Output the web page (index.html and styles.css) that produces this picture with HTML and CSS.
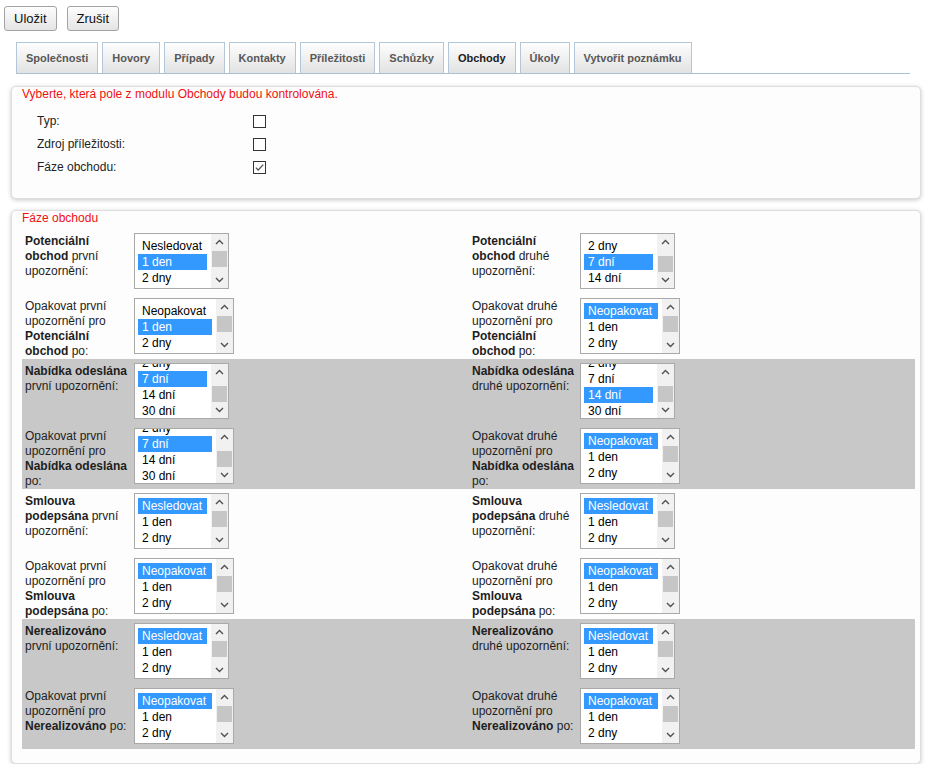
FILE: index.html
```html
<!DOCTYPE html>
<html lang="cs">
<head>
<meta charset="utf-8">
<title>Obchody</title>
<link rel="stylesheet" href="styles.css">
</head>
<body>
<div class="actions">
  <button class="btn">Uložit</button>
  <button class="btn">Zrušit</button>
</div>

<div class="tabs">
  <div class="tab">Společnosti</div>
  <div class="tab">Hovory</div>
  <div class="tab">Případy</div>
  <div class="tab">Kontakty</div>
  <div class="tab">Příležitosti</div>
  <div class="tab">Schůzky</div>
  <div class="tab active">Obchody</div>
  <div class="tab">Úkoly</div>
  <div class="tab">Vytvořit poznámku</div>
</div>

<div class="panel panel-fields">
  <div class="title">Vyberte, která pole z modulu Obchody budou kontrolována.</div>
  <div class="fields">
    <div class="field-label">Typ:</div>
    <div class="field-box"><span class="cb"></span></div>
    <div class="field-label">Zdroj příležitosti:</div>
    <div class="field-box"><span class="cb"></span></div>
    <div class="field-label">Fáze obchodu:</div>
    <div class="field-box"><span class="cb"><svg width="11" height="11" viewBox="0 0 11 11"><polyline points="1.8,5.6 4.2,8 9.3,2.6" fill="none" stroke="#555" stroke-width="1.3"/></svg></span></div>
  </div>
</div>

<div class="panel panel-stages">
  <div class="title">Fáze obchodu</div>
  <div class="stages">

    <!-- Row 1 -->
    <div class="srow">
      <div class="lbl"><b>Potenciální obchod</b> první upozornění:</div>
      <div class="cell">
        <div class="lb w95">
          <div class="lb-view"><div class="lb-list">
            <div class="opt">Nesledovat</div><div class="opt sel">1 den</div><div class="opt">2 dny</div><div class="opt">7 dní</div><div class="opt">14 dní</div><div class="opt">30 dní</div>
          </div></div>
          <div class="sb"><div class="sb-btn"><svg width="9" height="6" viewBox="0 0 9 6"><polyline points="1,5 4.5,1.5 8,5" fill="none" stroke="#505050" stroke-width="1.4"/></svg></div><div class="sb-track"><div class="sb-thumb t1"></div></div><div class="sb-btn"><svg width="9" height="6" viewBox="0 0 9 6"><polyline points="1,1 4.5,4.5 8,1" fill="none" stroke="#505050" stroke-width="1.4"/></svg></div></div>
        </div>
      </div>
      <div class="lbl"><b>Potenciální obchod</b> druhé upozornění:</div>
      <div class="cell">
        <div class="lb w95">
          <div class="lb-view"><div class="lb-list s32">
            <div class="opt">Nesledovat</div><div class="opt">1 den</div><div class="opt">2 dny</div><div class="opt sel">7 dní</div><div class="opt">14 dní</div><div class="opt">30 dní</div>
          </div></div>
          <div class="sb"><div class="sb-btn"><svg width="9" height="6" viewBox="0 0 9 6"><polyline points="1,5 4.5,1.5 8,5" fill="none" stroke="#505050" stroke-width="1.4"/></svg></div><div class="sb-track"><div class="sb-thumb t6"></div></div><div class="sb-btn"><svg width="9" height="6" viewBox="0 0 9 6"><polyline points="1,1 4.5,4.5 8,1" fill="none" stroke="#505050" stroke-width="1.4"/></svg></div></div>
        </div>
      </div>
    </div>

    <!-- Row 2 -->
    <div class="srow">
      <div class="lbl">Opakovat první upozornění pro <b>Potenciální obchod</b> po:</div>
      <div class="cell">
        <div class="lb w100">
          <div class="lb-view"><div class="lb-list">
            <div class="opt">Neopakovat</div><div class="opt sel">1 den</div><div class="opt">2 dny</div><div class="opt">7 dní</div><div class="opt">14 dní</div><div class="opt">30 dní</div>
          </div></div>
          <div class="sb"><div class="sb-btn"><svg width="9" height="6" viewBox="0 0 9 6"><polyline points="1,5 4.5,1.5 8,5" fill="none" stroke="#505050" stroke-width="1.4"/></svg></div><div class="sb-track"><div class="sb-thumb t1"></div></div><div class="sb-btn"><svg width="9" height="6" viewBox="0 0 9 6"><polyline points="1,1 4.5,4.5 8,1" fill="none" stroke="#505050" stroke-width="1.4"/></svg></div></div>
        </div>
      </div>
      <div class="lbl">Opakovat druhé upozornění pro <b>Potenciální obchod</b> po:</div>
      <div class="cell">
        <div class="lb w100">
          <div class="lb-view"><div class="lb-list">
            <div class="opt sel">Neopakovat</div><div class="opt">1 den</div><div class="opt">2 dny</div><div class="opt">7 dní</div><div class="opt">14 dní</div><div class="opt">30 dní</div>
          </div></div>
          <div class="sb"><div class="sb-btn"><svg width="9" height="6" viewBox="0 0 9 6"><polyline points="1,5 4.5,1.5 8,5" fill="none" stroke="#505050" stroke-width="1.4"/></svg></div><div class="sb-track"><div class="sb-thumb t1"></div></div><div class="sb-btn"><svg width="9" height="6" viewBox="0 0 9 6"><polyline points="1,1 4.5,4.5 8,1" fill="none" stroke="#505050" stroke-width="1.4"/></svg></div></div>
        </div>
      </div>
    </div>

    <!-- Row 3 -->
    <div class="srow gray">
      <div class="lbl"><b>Nabídka odeslána</b> první upozornění:</div>
      <div class="cell">
        <div class="lb w95">
          <div class="lb-view"><div class="lb-list s45">
            <div class="opt">Nesledovat</div><div class="opt">1 den</div><div class="opt">2 dny</div><div class="opt sel">7 dní</div><div class="opt">14 dní</div><div class="opt">30 dní</div>
          </div></div>
          <div class="sb"><div class="sb-btn"><svg width="9" height="6" viewBox="0 0 9 6"><polyline points="1,5 4.5,1.5 8,5" fill="none" stroke="#505050" stroke-width="1.4"/></svg></div><div class="sb-track"><div class="sb-thumb t6"></div></div><div class="sb-btn"><svg width="9" height="6" viewBox="0 0 9 6"><polyline points="1,1 4.5,4.5 8,1" fill="none" stroke="#505050" stroke-width="1.4"/></svg></div></div>
        </div>
      </div>
      <div class="lbl"><b>Nabídka odeslána</b> druhé upozornění:</div>
      <div class="cell">
        <div class="lb w95">
          <div class="lb-view"><div class="lb-list s45">
            <div class="opt">Nesledovat</div><div class="opt">1 den</div><div class="opt">2 dny</div><div class="opt">7 dní</div><div class="opt sel">14 dní</div><div class="opt">30 dní</div>
          </div></div>
          <div class="sb"><div class="sb-btn"><svg width="9" height="6" viewBox="0 0 9 6"><polyline points="1,5 4.5,1.5 8,5" fill="none" stroke="#505050" stroke-width="1.4"/></svg></div><div class="sb-track"><div class="sb-thumb t6"></div></div><div class="sb-btn"><svg width="9" height="6" viewBox="0 0 9 6"><polyline points="1,1 4.5,4.5 8,1" fill="none" stroke="#505050" stroke-width="1.4"/></svg></div></div>
        </div>
      </div>
    </div>

    <!-- Row 4 -->
    <div class="srow gray">
      <div class="lbl">Opakovat první upozornění pro <b>Nabídka odeslána</b> po:</div>
      <div class="cell">
        <div class="lb w100">
          <div class="lb-view"><div class="lb-list s45">
            <div class="opt">Neopakovat</div><div class="opt">1 den</div><div class="opt">2 dny</div><div class="opt sel">7 dní</div><div class="opt">14 dní</div><div class="opt">30 dní</div>
          </div></div>
          <div class="sb"><div class="sb-btn"><svg width="9" height="6" viewBox="0 0 9 6"><polyline points="1,5 4.5,1.5 8,5" fill="none" stroke="#505050" stroke-width="1.4"/></svg></div><div class="sb-track"><div class="sb-thumb t6"></div></div><div class="sb-btn"><svg width="9" height="6" viewBox="0 0 9 6"><polyline points="1,1 4.5,4.5 8,1" fill="none" stroke="#505050" stroke-width="1.4"/></svg></div></div>
        </div>
      </div>
      <div class="lbl">Opakovat druhé upozornění pro <b>Nabídka odeslána</b> po:</div>
      <div class="cell">
        <div class="lb w100">
          <div class="lb-view"><div class="lb-list">
            <div class="opt sel">Neopakovat</div><div class="opt">1 den</div><div class="opt">2 dny</div><div class="opt">7 dní</div><div class="opt">14 dní</div><div class="opt">30 dní</div>
          </div></div>
          <div class="sb"><div class="sb-btn"><svg width="9" height="6" viewBox="0 0 9 6"><polyline points="1,5 4.5,1.5 8,5" fill="none" stroke="#505050" stroke-width="1.4"/></svg></div><div class="sb-track"><div class="sb-thumb t1"></div></div><div class="sb-btn"><svg width="9" height="6" viewBox="0 0 9 6"><polyline points="1,1 4.5,4.5 8,1" fill="none" stroke="#505050" stroke-width="1.4"/></svg></div></div>
        </div>
      </div>
    </div>

    <!-- Row 5 -->
    <div class="srow">
      <div class="lbl"><b>Smlouva podepsána</b> první upozornění:</div>
      <div class="cell">
        <div class="lb w95">
          <div class="lb-view"><div class="lb-list">
            <div class="opt sel">Nesledovat</div><div class="opt">1 den</div><div class="opt">2 dny</div><div class="opt">7 dní</div><div class="opt">14 dní</div><div class="opt">30 dní</div>
          </div></div>
          <div class="sb"><div class="sb-btn"><svg width="9" height="6" viewBox="0 0 9 6"><polyline points="1,5 4.5,1.5 8,5" fill="none" stroke="#505050" stroke-width="1.4"/></svg></div><div class="sb-track"><div class="sb-thumb t1"></div></div><div class="sb-btn"><svg width="9" height="6" viewBox="0 0 9 6"><polyline points="1,1 4.5,4.5 8,1" fill="none" stroke="#505050" stroke-width="1.4"/></svg></div></div>
        </div>
      </div>
      <div class="lbl"><b>Smlouva podepsána</b> druhé upozornění:</div>
      <div class="cell">
        <div class="lb w95">
          <div class="lb-view"><div class="lb-list">
            <div class="opt sel">Nesledovat</div><div class="opt">1 den</div><div class="opt">2 dny</div><div class="opt">7 dní</div><div class="opt">14 dní</div><div class="opt">30 dní</div>
          </div></div>
          <div class="sb"><div class="sb-btn"><svg width="9" height="6" viewBox="0 0 9 6"><polyline points="1,5 4.5,1.5 8,5" fill="none" stroke="#505050" stroke-width="1.4"/></svg></div><div class="sb-track"><div class="sb-thumb t1"></div></div><div class="sb-btn"><svg width="9" height="6" viewBox="0 0 9 6"><polyline points="1,1 4.5,4.5 8,1" fill="none" stroke="#505050" stroke-width="1.4"/></svg></div></div>
        </div>
      </div>
    </div>

    <!-- Row 6 -->
    <div class="srow">
      <div class="lbl">Opakovat první upozornění pro <b>Smlouva podepsána</b> po:</div>
      <div class="cell">
        <div class="lb w100">
          <div class="lb-view"><div class="lb-list">
            <div class="opt sel">Neopakovat</div><div class="opt">1 den</div><div class="opt">2 dny</div><div class="opt">7 dní</div><div class="opt">14 dní</div><div class="opt">30 dní</div>
          </div></div>
          <div class="sb"><div class="sb-btn"><svg width="9" height="6" viewBox="0 0 9 6"><polyline points="1,5 4.5,1.5 8,5" fill="none" stroke="#505050" stroke-width="1.4"/></svg></div><div class="sb-track"><div class="sb-thumb t1"></div></div><div class="sb-btn"><svg width="9" height="6" viewBox="0 0 9 6"><polyline points="1,1 4.5,4.5 8,1" fill="none" stroke="#505050" stroke-width="1.4"/></svg></div></div>
        </div>
      </div>
      <div class="lbl">Opakovat druhé upozornění pro <b>Smlouva podepsána</b> po:</div>
      <div class="cell">
        <div class="lb w100">
          <div class="lb-view"><div class="lb-list">
            <div class="opt sel">Neopakovat</div><div class="opt">1 den</div><div class="opt">2 dny</div><div class="opt">7 dní</div><div class="opt">14 dní</div><div class="opt">30 dní</div>
          </div></div>
          <div class="sb"><div class="sb-btn"><svg width="9" height="6" viewBox="0 0 9 6"><polyline points="1,5 4.5,1.5 8,5" fill="none" stroke="#505050" stroke-width="1.4"/></svg></div><div class="sb-track"><div class="sb-thumb t1"></div></div><div class="sb-btn"><svg width="9" height="6" viewBox="0 0 9 6"><polyline points="1,1 4.5,4.5 8,1" fill="none" stroke="#505050" stroke-width="1.4"/></svg></div></div>
        </div>
      </div>
    </div>

    <!-- Row 7 -->
    <div class="srow gray">
      <div class="lbl"><b>Nerealizováno</b> první upozornění:</div>
      <div class="cell">
        <div class="lb w95">
          <div class="lb-view"><div class="lb-list">
            <div class="opt sel">Nesledovat</div><div class="opt">1 den</div><div class="opt">2 dny</div><div class="opt">7 dní</div><div class="opt">14 dní</div><div class="opt">30 dní</div>
          </div></div>
          <div class="sb"><div class="sb-btn"><svg width="9" height="6" viewBox="0 0 9 6"><polyline points="1,5 4.5,1.5 8,5" fill="none" stroke="#505050" stroke-width="1.4"/></svg></div><div class="sb-track"><div class="sb-thumb t1"></div></div><div class="sb-btn"><svg width="9" height="6" viewBox="0 0 9 6"><polyline points="1,1 4.5,4.5 8,1" fill="none" stroke="#505050" stroke-width="1.4"/></svg></div></div>
        </div>
      </div>
      <div class="lbl"><b>Nerealizováno</b> druhé upozornění:</div>
      <div class="cell">
        <div class="lb w95">
          <div class="lb-view"><div class="lb-list">
            <div class="opt sel">Nesledovat</div><div class="opt">1 den</div><div class="opt">2 dny</div><div class="opt">7 dní</div><div class="opt">14 dní</div><div class="opt">30 dní</div>
          </div></div>
          <div class="sb"><div class="sb-btn"><svg width="9" height="6" viewBox="0 0 9 6"><polyline points="1,5 4.5,1.5 8,5" fill="none" stroke="#505050" stroke-width="1.4"/></svg></div><div class="sb-track"><div class="sb-thumb t1"></div></div><div class="sb-btn"><svg width="9" height="6" viewBox="0 0 9 6"><polyline points="1,1 4.5,4.5 8,1" fill="none" stroke="#505050" stroke-width="1.4"/></svg></div></div>
        </div>
      </div>
    </div>

    <!-- Row 8 -->
    <div class="srow gray">
      <div class="lbl">Opakovat první upozornění pro <b>Nerealizováno</b> po:</div>
      <div class="cell">
        <div class="lb w100">
          <div class="lb-view"><div class="lb-list">
            <div class="opt sel">Neopakovat</div><div class="opt">1 den</div><div class="opt">2 dny</div><div class="opt">7 dní</div><div class="opt">14 dní</div><div class="opt">30 dní</div>
          </div></div>
          <div class="sb"><div class="sb-btn"><svg width="9" height="6" viewBox="0 0 9 6"><polyline points="1,5 4.5,1.5 8,5" fill="none" stroke="#505050" stroke-width="1.4"/></svg></div><div class="sb-track"><div class="sb-thumb t1"></div></div><div class="sb-btn"><svg width="9" height="6" viewBox="0 0 9 6"><polyline points="1,1 4.5,4.5 8,1" fill="none" stroke="#505050" stroke-width="1.4"/></svg></div></div>
        </div>
      </div>
      <div class="lbl">Opakovat druhé upozornění pro <b>Nerealizováno</b> po:</div>
      <div class="cell">
        <div class="lb w100">
          <div class="lb-view"><div class="lb-list">
            <div class="opt sel">Neopakovat</div><div class="opt">1 den</div><div class="opt">2 dny</div><div class="opt">7 dní</div><div class="opt">14 dní</div><div class="opt">30 dní</div>
          </div></div>
          <div class="sb"><div class="sb-btn"><svg width="9" height="6" viewBox="0 0 9 6"><polyline points="1,5 4.5,1.5 8,5" fill="none" stroke="#505050" stroke-width="1.4"/></svg></div><div class="sb-track"><div class="sb-thumb t1"></div></div><div class="sb-btn"><svg width="9" height="6" viewBox="0 0 9 6"><polyline points="1,1 4.5,4.5 8,1" fill="none" stroke="#505050" stroke-width="1.4"/></svg></div></div>
        </div>
      </div>
    </div>

  </div>
</div>
</body>
</html>
```

FILE: styles.css
```css
* { box-sizing: border-box; }

body {
  margin: 0;
  background: #fff;
  color: #222;
  font-family: "Liberation Sans", Arial, sans-serif;
  font-size: 12px;
}

/* top buttons */
.actions {
  display: flex;
  gap: 10px;
  padding: 6px 0 0 4px;
}
.btn {
  height: 25px;
  padding: 0 9px;
  margin: 0;
  border: 1px solid #a3a3a3;
  border-radius: 3px;
  background: linear-gradient(#fdfdfd, #e4e4e4);
  font-family: "Liberation Sans", Arial, sans-serif;
  font-size: 13px;
  color: #111;
}

/* tabs */
.tabs {
  display: flex;
  gap: 4px;
  margin: 11px 19px 0 16px;
  border-bottom: 1px solid #a9bfd3;
}
.tab {
  height: 31px;
  line-height: 30px;
  padding: 0 9px;
  border: 1px solid #b3c7d9;
  border-bottom: 0;
  background: linear-gradient(#fefefe, #e2e2e2);
  font-size: 11px;
  font-weight: bold;
  color: #585858;
}
.tab.active { color: #1c1c1c; }

/* panels */
.panel {
  margin: 12px 8px 0 11px;
  border: 1px solid #dedede;
  border-radius: 5px;
  background: #fdfdfd;
  box-shadow: 0 1px 4px rgba(0, 0, 0, 0.22);
}
.title {
  color: #ee1111;
  font-size: 12px;
  line-height: 14px;
}
.panel-fields {
  height: 113px;
  padding: 0 10px;
}
.fields {
  display: grid;
  grid-template-columns: 216px 20px;
  grid-auto-rows: 23px;
  margin-top: 9px;
  padding-left: 15px;
}
.field-label {
  line-height: 23px;
  color: #222;
}
.field-box {
  display: flex;
  align-items: center;
}
.cb {
  width: 13px;
  height: 13px;
  border: 1px solid #333;
  background: #fff;
  display: flex;
  align-items: center;
  justify-content: center;
}
.cb svg { display: block; }

.panel-stages {
  margin-top: 11px;
  padding: 0 5px 14px 10px;
}
.stages { margin-top: 4px; }
.srow {
  display: grid;
  grid-template-columns: 110px 337px 109px 1fr;
  height: 65px;
}
.srow.gray { background: #c8c8c8; }
.lbl {
  padding: 5px 2px 0 3px;
  line-height: 15px;
  color: #1e1e1e;
}
.lbl b { font-weight: bold; }
.cell { padding: 4px 0 0 2px; }

/* listbox */
.lb {
  display: flex;
  height: 56px;
  border: 1px solid #a9a9a9;
  background: #fff;
}
.lb.w95 { width: 95px; }
.lb.w100 { width: 100px; }
.lb-view {
  flex: 1;
  overflow: hidden;
  padding: 0 4px 0 3px;
}
.lb-list { padding-top: 4px; }
.lb-list.s32 { margin-top: -32px; }
.lb-list.s45 { margin-top: -45px; }
.opt {
  height: 16px;
  line-height: 16px;
  padding: 0 4px;
  font-size: 12px;
  color: #000;
  white-space: nowrap;
}
.opt.sel { background: #3399ff; color: #fff; }

.sb {
  width: 17px;
  display: flex;
  flex-direction: column;
  background: #f1f1f1;
}
.sb-btn {
  height: 16px;
  display: flex;
  align-items: center;
  justify-content: center;
}
.sb-btn svg { display: block; }
.sb-track { flex: 1; overflow: hidden; }
.sb-thumb {
  height: 16px;
  margin: 0 1px;
  background: #c6c6c6;
}
.sb-thumb.t1 { margin-top: 1px; }
.sb-thumb.t6 { margin-top: 6px; }
```
